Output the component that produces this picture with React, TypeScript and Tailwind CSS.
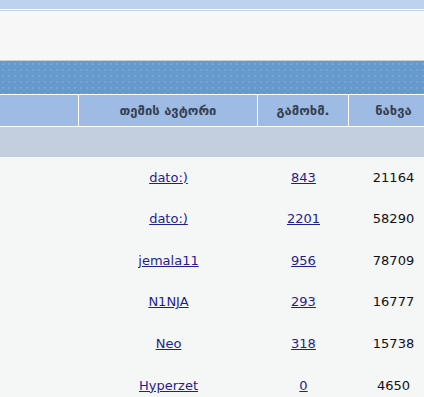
import React from "react";

const rows = [
  { author: "dato:)", replies: "843", views: "21164", h: "h-[41px]" },
  { author: "dato:)", replies: "2201", views: "58290", h: "h-[42px]" },
  { author: "jemala11", replies: "956", views: "78709", h: "h-[41px]" },
  { author: "N1NJA", replies: "293", views: "16777", h: "h-[42px]" },
  { author: "Neo", replies: "318", views: "15738", h: "h-[42px]" },
  { author: "Hyperzet", replies: "0", views: "4650", h: "h-[41px]" },
];

export default function App() {
  return (
    <div
      className="w-[424px] h-[397px] overflow-hidden bg-[#f5f6f6] text-[13px]"
      style={{ fontFamily: '"DejaVu Sans", Verdana, sans-serif' }}
    >
      <div className="w-[438px]">
        <div className="h-[9px] bg-[#bcd2ee]" />
        <div className="h-px bg-[#ffffff]" />
        <div className="h-px bg-[#c2d5ec]" />
        <div className="h-[49px] bg-[#f7f7f7]" />
        <div className="h-px bg-[#c6d0da]" />
        <div className="h-[33px] bg-[#6699cc] bg-[radial-gradient(circle,#80acd9_0.6px,transparent_0.9px)] bg-[length:6px_6px]" />
        <div className="h-px bg-white" />
        <div className="flex h-[31px] bg-[#9dbbe3] text-[#354052] text-[13px] font-bold">
          <div className="w-[78px]" />
          <div className="w-px bg-white" />
          <div className="w-[178px] flex items-center justify-center">თემის ავტორი</div>
          <div className="w-px bg-white" />
          <div className="w-[90px] flex items-center justify-center">გამოხმ.</div>
          <div className="w-px bg-white" />
          <div className="w-[89px] flex items-center justify-center">ნახვა</div>
        </div>
        <div className="h-px bg-white" />
        <div className="h-[30px] bg-[#c3cfdf]" />
        {rows.map((r, i) => (
          <div key={i} className={`flex ${r.h}`}>
            <div className="w-[79px]" />
            <div className="w-[179px] flex items-center justify-center">
              <a href="#" className="text-[#1f1f8f] underline">{r.author}</a>
            </div>
            <div className="w-[91px] flex items-center justify-center">
              <a href="#" className="text-[#1f1f8f] underline">{r.replies}</a>
            </div>
            <div className="w-[89px] flex items-center justify-center text-[#111111]">{r.views}</div>
          </div>
        ))}
      </div>
    </div>
  );
}
